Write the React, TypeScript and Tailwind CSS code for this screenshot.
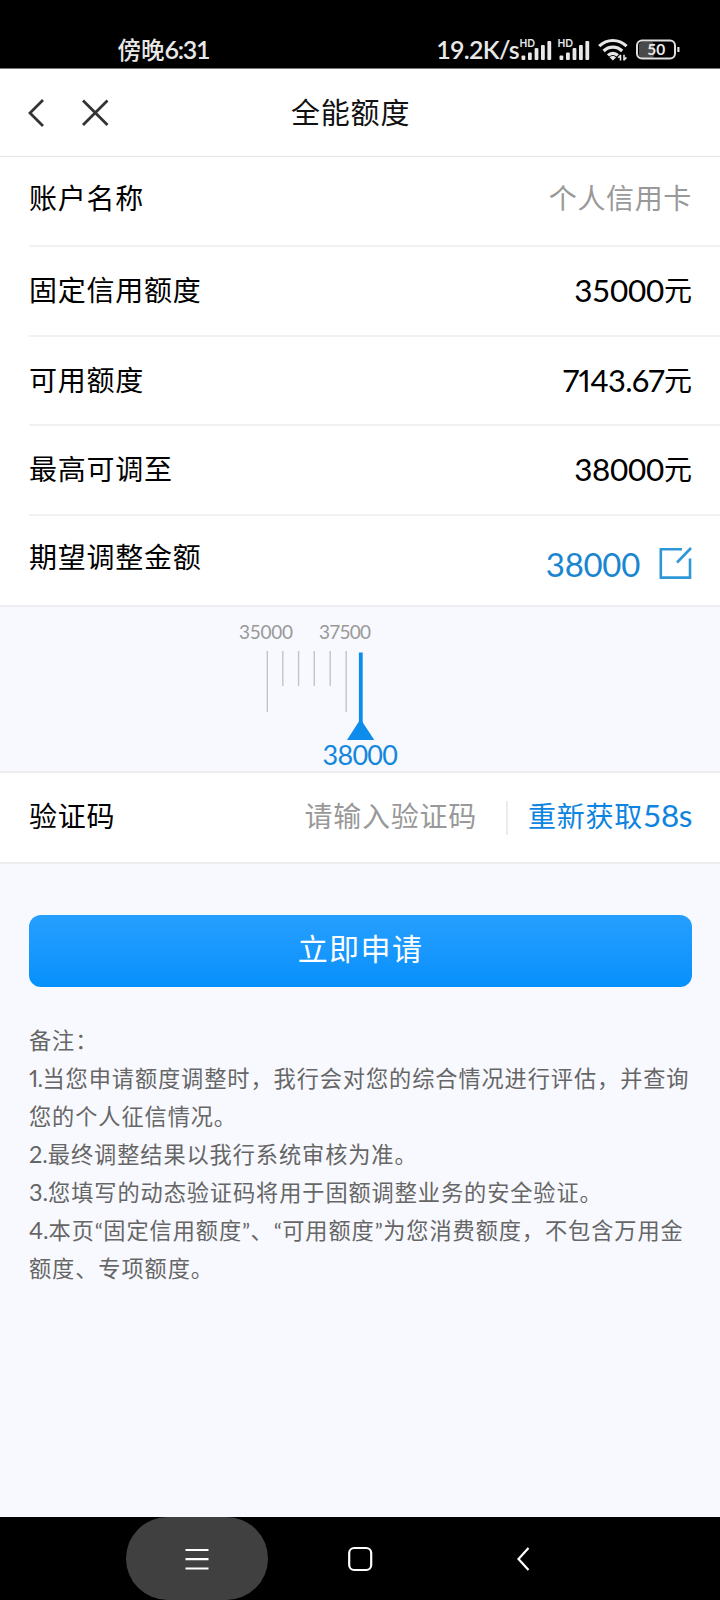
import type { ReactNode } from "react";

const cjk = "font-['Noto_Sans_CJK_SC',sans-serif]";
const num = "font-['Lato','Noto_Sans_CJK_SC',sans-serif]";

function Signal() {
  return (
    <svg className="overflow-visible" width="32" height="24" viewBox="0 0 32 24" fill="#e8e8e8">
      <text x="-1.5" y="10" fontSize="10.5" fontWeight="700" fontFamily="Lato, sans-serif" textLength="15.5" lengthAdjust="spacingAndGlyphs">
        HD
      </text>
      <rect x="0.5" y="18.5" width="3.8" height="4.5" rx="1" />
      <rect x="7" y="15.5" width="3.8" height="7.5" rx="1" />
      <rect x="13.6" y="11" width="3.8" height="12" rx="1" />
      <rect x="20" y="8" width="3.8" height="15" rx="1" />
      <rect x="26.4" y="4" width="3.8" height="19" rx="1" />
    </svg>
  );
}

function Wifi() {
  return (
    <svg width="30" height="24" viewBox="0 0 30 24" fill="none" stroke="#e8e8e8" strokeWidth="3.2">
      <path d="M1.2 9.2C9 1.6 20.6 1.6 28.6 9.2" />
      <path d="M5.6 14C11 8.8 18.8 8.8 24.2 14" />
      <path d="M10 18.4C12.8 15.6 17 15.6 19.8 18.4" />
      <path d="M11.6 20.2 14.9 23.6 18 20.4C16.2 18.6 13.4 18.6 11.6 20.2Z" fill="#e8e8e8" stroke="none" />
      <path d="M22.5 18v5.6M22.8 18l-2.6 2.8M26 23.4V17.8M25.8 23.2l2.6-2.8" strokeWidth="1.6" />
    </svg>
  );
}

function Battery() {
  return (
    <svg width="44" height="22" viewBox="0 0 44 22">
      <rect x="3" y="3" width="15" height="16" rx="3" fill="#4a4a4a" />
      <rect x="1" y="1.5" width="38" height="18" rx="5" fill="none" stroke="#e0e0e0" strokeWidth="2" />
      <path d="M42.4 8v5" stroke="#e0e0e0" strokeWidth="2.2" />
      <text x="20.3" y="16" textAnchor="middle" fontSize="15.5" fontWeight="700" fill="#e8e8e8" fontFamily="Lato, sans-serif">
        50
      </text>
    </svg>
  );
}

function StatusBar() {
  return (
    <div className="flex h-[69px] shrink-0 border-b border-[#777] bg-black pl-[117.5px] text-[#e8e8e8]">
      <div className="flex pt-[34px] leading-[30px]">
        <span className={`${cjk} text-[23.5px] font-medium`}>傍晚</span>
        <span className={`${num} text-[25px] font-semibold tracking-[-1.3px]`}>6:31</span>
      </div>
      <div className="ml-auto flex pr-[40px] pt-[37px]">
        <span className={`${num} mt-[-3px] text-[25px] font-semibold leading-[30px] tracking-[-0.7px]`}>19.2K/s</span>
        <span className="ml-[2px] flex gap-[6px]">
          <Signal />
          <Signal />
        </span>
        <span className="ml-[7px]"><Wifi /></span>
        <span className="ml-[8px] mt-[2px]"><Battery /></span>
      </div>
    </div>
  );
}

function Header() {
  return (
    <header className="flex h-[88px] shrink-0 items-center border-b border-[#e6e6e8] bg-white">
      <svg width="110" height="30" viewBox="0 0 110 30" className="w-[291px] shrink-0" preserveAspectRatio="xMinYMid" fill="none" stroke="#333" strokeWidth="2.8">
        <path d="M43 2 30 15 43 28" />
        <path d="M83 2.5 107.5 27M107.5 2.5 83 27" />
      </svg>
      <h1 className={`${cjk} pb-[4px] text-[29px] leading-[40px] tracking-[0.8px] text-[#111]`}>全能额度</h1>
    </header>
  );
}

function Row({ label, children, last = false, className }: { label: string; children: ReactNode; last?: boolean; className: string }) {
  return (
    <div className={`${last ? "pl-[29px]" : "ml-[29px] border-b-2 border-[#f1f1f3]"} flex shrink-0 items-start justify-between pr-[28px] ${className}`}>
      <span className={`${cjk} text-[28px] leading-[40px] tracking-[0.75px] text-black`}>{label}</span>
      {children}
    </div>
  );
}

function Amount({ value, className }: { value: string; className: string }) {
  return (
    <span className="flex leading-[40px] text-black">
      <span className={`${num} mt-[1px] ${className}`}>{value}</span>
      <span className={`${cjk} text-[28px]`}>元</span>
    </span>
  );
}

const ticks = [
  { x: 267.3, long: true },
  { x: 282.8, long: false },
  { x: 298.6, long: false },
  { x: 314.3, long: false },
  { x: 330.2, long: false },
  { x: 346.2, long: true },
];

function Ruler() {
  return (
    <div className="h-[168px] shrink-0 border-y-2 border-[#ededef]">
      <svg width="720" height="164" viewBox="0 607 720 164" fontFamily="Lato, sans-serif">
        <text x="239" y="639" fontSize="19" fill="#999" textLength="54">35000</text>
        <text x="319" y="639" fontSize="19" fill="#999" textLength="52">37500</text>
        {ticks.map((t) => (
          <path key={t.x} d={`M${t.x} 651V${t.long ? 712 : 686}`} stroke="#c4c4c6" strokeWidth="1.4" />
        ))}
        <path d="M360.8 652.5V725" stroke="#0d8cec" strokeWidth="3.8" />
        <path d="M360.5 719 374.3 740H347Z" fill="#0d8cec" />
        <text x="322.5" y="765" fontSize="27" fill="#1487dc" textLength="75.5">38000</text>
      </svg>
    </div>
  );
}

const notes = [
  { text: "备注：" },
  { index: "1.", text: "当您申请额度调整时，我行会对您的综合情况进行评估，并查询" },
  { text: "您的个人征信情况。" },
  { index: "2.", text: "最终调整结果以我行系统审核为准。" },
  { index: "3.", text: "您填写的动态验证码将用于固额调整业务的安全验证。" },
  { index: "4.", text: "本页“固定信用额度”、“可用额度”为您消费额度，不包含万用金" },
  { text: "额度、专项额度。" },
];

function Note({ index, text }: { index?: string; text: string }) {
  return (
    <p>
      {index && <span className={`${num} proportional-nums text-[23.5px] ${index === "1." ? "tracking-[-0.7px]" : "tracking-[0px]"}`}>{index}</span>}
      {text.split(/([“”])/).map((part, i) =>
        part === "“" || part === "”" ? (
          <span key={i} className={`${num} text-[22px] tracking-[0.5px]`}>{part}</span>
        ) : (
          <span key={i}>{part}</span>
        ),
      )}
    </p>
  );
}

function NavBar() {
  return (
    <nav className="mt-auto flex h-[83px] shrink-0 bg-black pl-[126px]">
      <div className="flex h-[83px] w-[142px] items-center justify-center rounded-full bg-[#404040]">
        <svg width="24" height="24" viewBox="0 0 24 24" stroke="#fff" strokeWidth="2.2">
          <path d="M0.5 3H23.5M0.5 12.2H23.5M0.5 21.5H23.5" />
        </svg>
      </div>
      <svg className="ml-[79px] mt-[29px]" width="27" height="27" viewBox="0 0 27 27" fill="none" stroke="#fff" strokeWidth="2.2">
        <rect x="2.2" y="2" width="22" height="22" rx="5" />
      </svg>
      <svg className="ml-[141px] mt-[29px]" width="16" height="27" viewBox="0 0 16 27" fill="none" stroke="#fff" strokeWidth="2.2">
        <path d="M13.5 2 3.5 13 13.5 24" />
      </svg>
    </nav>
  );
}

export default function App() {
  return (
    <div className="flex h-[1600px] w-[720px] flex-col overflow-hidden whitespace-nowrap bg-[#f8f9fe]">
      <StatusBar />
      <Header />
      <main className="flex flex-col">
        <section className="flex flex-col bg-white">
          <Row label="账户名称" className="h-[90px] pt-[20px]">
            <span className={`${cjk} text-[28px] leading-[40px] tracking-[0.65px] text-[#999]`}>个人信用卡</span>
          </Row>
          <Row label="固定信用额度" className="h-[90px] pt-[22px]">
            <Amount value="35000" className="text-[31.5px] tracking-[-0.3px]" />
          </Row>
          <Row label="可用额度" className="h-[89px] pt-[22px]">
            <Amount value="7143.67" className="text-[31px] proportional-nums tracking-[-0.7px]" />
          </Row>
          <Row label="最高可调至" className="h-[90px] pt-[22px]">
            <Amount value="38000" className="text-[31.5px] tracking-[-0.3px]" />
          </Row>
          <Row label="期望调整金额" last className="h-[89px] pt-[20px]">
            <span className="flex pt-[8px] text-[#1a86d0]">
              <span className={`${num} text-[33px] leading-[40px] tracking-[-0.3px]`}>38000</span>
              <svg className="ml-[18px] mt-[2px]" width="34" height="34" viewBox="0 0 34 34" fill="none" stroke="#2e97d8" strokeWidth="2.6">
                <path d="M24 3.2H2.8V31.6H32V12.5M19 16.5 33 2" />
              </svg>
            </span>
          </Row>
        </section>
        <Ruler />
        <section className="flex h-[91px] shrink-0 items-start border-b-2 border-[#ededef] bg-white pl-[29px] pr-[28px] pt-[22px]">
          <span className={`${cjk} text-[28px] leading-[40px] tracking-[0.75px] text-black`}>验证码</span>
          <span className={`${cjk} ml-auto text-[28px] leading-[40px] tracking-[0.75px] text-[#999]`}>请输入验证码</span>
          <span className="ml-[29px] mt-[6px] h-[34px] w-[2px] bg-[#ececee]" />
          <span className="ml-[20px] flex leading-[40px] text-[#0d84e0]">
            <span className={`${cjk} text-[28px] tracking-[0.75px]`}>重新获取</span>
            <span className={`${num} text-[31.5px] tracking-[-0.4px]`}>58s</span>
          </span>
        </section>
        <button className={`${cjk} mx-[29px] mr-[28px] mt-[51px] h-[72px] shrink-0 rounded-[12px] bg-linear-to-b from-[#259fff] to-[#0490fb] pb-[7px] text-[30px] tracking-[1.4px] text-white`}>
          立即申请
        </button>
        <div className={`${cjk} mt-[33px] flex flex-col pl-[29px] text-[22.2px] leading-[38px] tracking-[0.92px] text-[#666] [&>p]:h-[38px]`}>
          {notes.map((n) => (
            <Note key={n.text} {...n} />
          ))}
        </div>
      </main>
      <NavBar />
    </div>
  );
}
